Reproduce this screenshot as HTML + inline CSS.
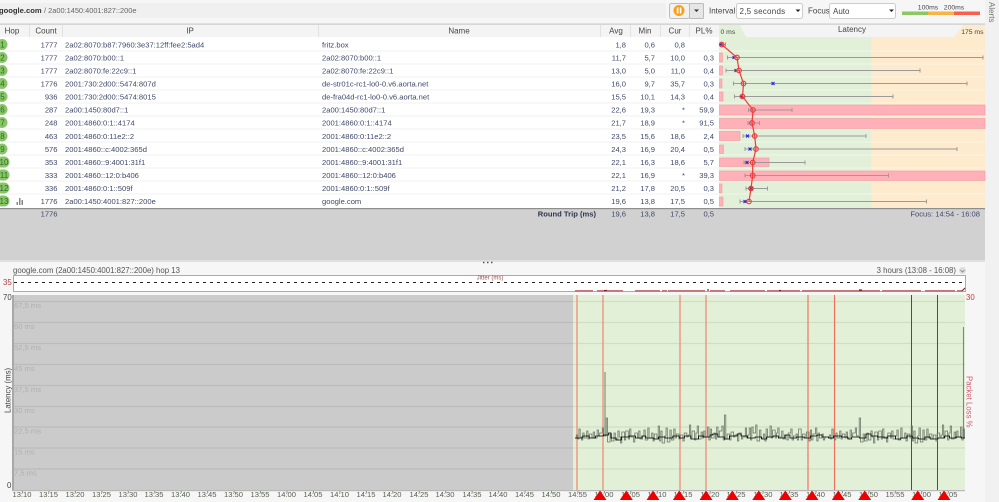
<!DOCTYPE html>
<html><head><meta charset="utf-8">
<style>
html,body{margin:0;padding:0;background:#f5f5f5;width:999px;height:502px;overflow:hidden}
svg{display:block;font-family:"Liberation Sans",sans-serif}
text{font-size:7.6px;fill:#3f4a6a}
.h text{fill:#444;text-anchor:middle;font-size:8px}
.r{text-anchor:end}
.n text{fill:#2f6b2f;text-anchor:middle;font-size:8px}
.t text{fill:#55604f;text-anchor:middle;font-size:7.6px}
.g text{fill:#b0b0b0;font-size:7.6px}
.k{fill:#444}
</style></head><body>
<svg width="999" height="502" viewBox="0 0 999 502" xmlns="http://www.w3.org/2000/svg">
<rect width="999" height="502" fill="#f6f6f6"/>
<rect x="985" width="14" height="502" fill="#f1f1f1"/>
<g filter="url(#b)">
<defs>
<filter id="b" x="0" y="0" width="100%" height="100%"><feGaussianBlur stdDeviation="0.38"/></filter>
<clipPath id="c"><rect x="575" y="295" width="390" height="195"/></clipPath>
</defs>
<!-- toolbar -->
<rect x="0" y="3" width="666" height="15" fill="#f0f0f0"/>
<text x="-1" y="13" style="font-weight:bold;font-size:7.6px;fill:#333">google.com</text>
<text x="44" y="13" style="font-size:7.4px;fill:#666">/ 2a00:1450:4001:827::200e</text>
<rect x="669.500" y="3.500" width="20" height="15" rx="2" fill="#f2f2f2" stroke="#bbb"/>
<rect x="689.500" y="3.500" width="14" height="15" rx="1" fill="#e6e6e6" stroke="#bbb"/>
<circle cx="679" cy="10.500" r="5.500" fill="#f6a01e"/>
<rect x="676.800" y="7.500" width="1.600" height="6" fill="#fff"/><rect x="679.800" y="7.500" width="1.600" height="6" fill="#fff"/>
<path d="M694 9.500h5l-2.500 2.500z" fill="#333"/>
<text x="709" y="13.500" class="k" style="font-size:8px">Interval</text>
<rect x="736.500" y="3.500" width="66" height="15" rx="2" fill="#fff" stroke="#ccc"/>
<text x="739.500" y="14" class="k" style="font-size:8px;letter-spacing:.25px">2,5 seconds</text>
<path d="M795.500 9.500h5l-2.500 2.500z" fill="#222"/>
<text x="808" y="13.500" class="k" style="font-size:8px">Focus</text>
<rect x="829.500" y="3.500" width="66" height="15" rx="2" fill="#fff" stroke="#ccc"/>
<text x="833" y="14" class="k" style="font-size:8px">Auto</text>
<path d="M889 9.500h5l-2.500 2.500z" fill="#222"/>
<text x="928" y="9.500" class="k" style="font-size:6.800px;text-anchor:middle">100ms</text>
<text x="954" y="9.500" class="k" style="font-size:6.800px;text-anchor:middle">200ms</text>
<rect x="902" y="11.500" width="26" height="3.500" fill="#8cc665"/><rect x="928" y="11.500" width="26" height="3.500" fill="#f7b547"/><rect x="954" y="11.500" width="26" height="3.500" fill="#f8604e"/>
<text transform="translate(989,2) rotate(90)" class="k" style="font-size:8px;fill:#777">Alerts</text>

<!-- header row -->
<rect x="0" y="24" width="985" height="13" fill="#f4f4f4"/>
<rect x="0" y="23.500" width="985" height="1.200" fill="#c9c9c9"/>
<path d="M29.500 25v12M62.500 25v12M318.500 25v12M600.500 25v12M630.500 25v12M660.500 25v12M689.500 25v12M719.500 25v12" stroke="#e2e2e2"/>
<g class="h">
<text x="12" y="33.500">Hop</text><text x="46" y="33.500">Count</text><text x="190" y="33.500">IP</text><text x="459" y="33.500">Name</text>
<text x="616" y="33.500">Avg</text><text x="645" y="33.500">Min</text><text x="675" y="33.500">Cur</text><text x="704" y="33.500">PL%</text>
<text x="852" y="32">Latency</text>
</g>
<path d="M719 25h21l6 12h-27z" fill="#e2f0d9"/><path d="M985 25h-22l-9 12h31z" fill="#fdebcd"/>
<text x="720.500" y="34" class="k" style="font-size:6.800px">0 ms</text>
<text x="983.500" y="34" class="k r" style="font-size:6.800px">175 ms</text>

<!-- table body -->
<rect x="0" y="37" width="719" height="171" fill="#fff"/>
<rect x="719" y="37" width="152.500" height="171" fill="#e2f0d9"/>
<rect x="871.500" y="37" width="113.500" height="171" fill="#feebcd"/>
<path d="M0 51h719M0 64h719M0 77h719M0 90h719M0 103h719M0 116h719M0 129h719M0 142h719M0 155h719M0 168h719M0 181h719M0 194h719" stroke="#f2f2f2" fill="none"/>
<path d="M719 51h266M719 64h266M719 77h266M719 90h266M719 103h266M719 116h266M719 129h266M719 142h266M719 155h266M719 168h266M719 181h266M719 194h266" stroke="#fff" stroke-opacity=".45" fill="none"/>

<!-- hop badges -->
<g fill="#88c565">
<circle cx="2" cy="44.500" r="5.500"/><circle cx="2" cy="57.500" r="5.500"/><circle cx="2" cy="70.500" r="5.500"/><circle cx="2" cy="83.500" r="5.500"/><circle cx="2" cy="96.500" r="5.500"/><circle cx="2" cy="109.500" r="5.500"/><circle cx="2" cy="122.500" r="5.500"/><circle cx="2" cy="136" r="5.500"/><circle cx="2" cy="149" r="5.500"/>
<rect x="-4" y="156.500" width="13.500" height="11" rx="5.500"/><rect x="-4" y="169.500" width="13.500" height="11" rx="5.500"/><rect x="-4" y="182.500" width="13.500" height="11" rx="5.500"/><rect x="-4" y="195.500" width="13.500" height="11" rx="5.500"/>
</g>
<g class="n">
<text x="2.500" y="47.500">1</text><text x="2.500" y="60.500">2</text><text x="2.500" y="73.500">3</text><text x="2.500" y="86.500">4</text><text x="2.500" y="99.500">5</text><text x="2.500" y="112.500">6</text><text x="2.500" y="125.500">7</text><text x="2.500" y="139">8</text><text x="2.500" y="152">9</text><text x="4" y="165">10</text><text x="4" y="178">11</text><text x="4" y="191">12</text><text x="4" y="204">13</text>
</g>
<path d="M16.500 202v3h1.500v-3zM19 198v7h1.500v-7zM21.500 200v5h1.500v-5z" fill="#888" stroke="none"/>

<!-- count -->
<g class="r">
<text class="r" x="57.500" y="47.500">1777</text><text class="r" x="57.500" y="60.500">1777</text><text class="r" x="57.500" y="73.500">1777</text><text class="r" x="57.500" y="86.500">1776</text><text class="r" x="57.500" y="99.500">936</text><text class="r" x="57.500" y="112.500">287</text><text class="r" x="57.500" y="125.500">248</text><text class="r" x="57.500" y="139">463</text><text class="r" x="57.500" y="152">576</text><text class="r" x="57.500" y="165">353</text><text class="r" x="57.500" y="178">333</text><text class="r" x="57.500" y="191">336</text><text class="r" x="57.500" y="204">1776</text>
</g>
<!-- ip -->
<text x="65" y="47.500">2a02:8070:b87:7960:3e37:12ff:fee2:5ad4</text>
<text x="65" y="60.500">2a02:8070:b00::1</text>
<text x="65" y="73.500">2a02:8070:fe:22c9::1</text>
<text x="65" y="86.500">2001:730:2d00::5474:807d</text>
<text x="65" y="99.500">2001:730:2d00::5474:8015</text>
<text x="65" y="112.500">2a00:1450:80d7::1</text>
<text x="65" y="125.500">2001:4860:0:1::4174</text>
<text x="65" y="139">2001:4860:0:11e2::2</text>
<text x="65" y="152">2001:4860::c:4002:365d</text>
<text x="65" y="165">2001:4860::9:4001:31f1</text>
<text x="65" y="178">2001:4860::12:0:b406</text>
<text x="65" y="191">2001:4860:0:1::509f</text>
<text x="65" y="204">2a00:1450:4001:827::200e</text>
<!-- name -->
<text x="322" y="47.500">fritz.box</text>
<text x="322" y="60.500">2a02:8070:b00::1</text>
<text x="322" y="73.500">2a02:8070:fe:22c9::1</text>
<text x="322" y="86.500">de-str01c-rc1-lo0-0.v6.aorta.net</text>
<text x="322" y="99.500">de-fra04d-rc1-lo0-0.v6.aorta.net</text>
<text x="322" y="112.500">2a00:1450:80d7::1</text>
<text x="322" y="125.500">2001:4860:0:1::4174</text>
<text x="322" y="139">2001:4860:0:11e2::2</text>
<text x="322" y="152">2001:4860::c:4002:365d</text>
<text x="322" y="165">2001:4860::9:4001:31f1</text>
<text x="322" y="178">2001:4860::12:0:b406</text>
<text x="322" y="191">2001:4860:0:1::509f</text>
<text x="322" y="204">google.com</text>
<!-- stats -->
<text class="r" x="626" y="47.500">1,8</text><text class="r" x="655" y="47.500">0,6</text><text class="r" x="685" y="47.500">0,8</text>
<text class="r" x="626" y="60.500">11,7</text><text class="r" x="655" y="60.500">5,7</text><text class="r" x="685" y="60.500">10,0</text><text class="r" x="714" y="60.500">0,3</text>
<text class="r" x="626" y="73.500">13,0</text><text class="r" x="655" y="73.500">5,0</text><text class="r" x="685" y="73.500">11,0</text><text class="r" x="714" y="73.500">0,4</text>
<text class="r" x="626" y="86.500">16,0</text><text class="r" x="655" y="86.500">9,7</text><text class="r" x="685" y="86.500">35,7</text><text class="r" x="714" y="86.500">0,3</text>
<text class="r" x="626" y="99.500">15,5</text><text class="r" x="655" y="99.500">10,1</text><text class="r" x="685" y="99.500">14,3</text><text class="r" x="714" y="99.500">0,4</text>
<text class="r" x="626" y="112.500">22,6</text><text class="r" x="655" y="112.500">19,3</text><text class="r" x="685" y="112.500">*</text><text class="r" x="714" y="112.500">59,9</text>
<text class="r" x="626" y="125.500">21,7</text><text class="r" x="655" y="125.500">18,9</text><text class="r" x="685" y="125.500">*</text><text class="r" x="714" y="125.500">91,5</text>
<text class="r" x="626" y="139">23,5</text><text class="r" x="655" y="139">15,6</text><text class="r" x="685" y="139">18,6</text><text class="r" x="714" y="139">2,4</text>
<text class="r" x="626" y="152">24,3</text><text class="r" x="655" y="152">16,9</text><text class="r" x="685" y="152">20,4</text><text class="r" x="714" y="152">0,5</text>
<text class="r" x="626" y="165">22,1</text><text class="r" x="655" y="165">16,3</text><text class="r" x="685" y="165">18,6</text><text class="r" x="714" y="165">5,7</text>
<text class="r" x="626" y="178">22,1</text><text class="r" x="655" y="178">16,9</text><text class="r" x="685" y="178">*</text><text class="r" x="714" y="178">39,3</text>
<text class="r" x="626" y="191">21,2</text><text class="r" x="655" y="191">17,8</text><text class="r" x="685" y="191">20,5</text><text class="r" x="714" y="191">0,3</text>
<text class="r" x="626" y="204">19,6</text><text class="r" x="655" y="204">13,8</text><text class="r" x="685" y="204">17,5</text><text class="r" x="714" y="204">0,5</text>

<!-- PL bars -->
<g fill="#ffb0b8" stroke="#f49a9a" stroke-width=".6">
<rect x="719.500" y="53" width="3" height="9"/><rect x="719.500" y="66" width="3" height="9"/><rect x="719.500" y="79" width="2.500" height="9"/><rect x="719.500" y="92" width="3.500" height="9"/>
<rect x="719.500" y="105" width="265.500" height="10"/><rect x="719.500" y="118.500" width="265.500" height="10"/>
<rect x="719.500" y="131.500" width="20.500" height="9"/><rect x="719.500" y="145" width="4" height="8.500"/><rect x="719.500" y="158" width="49.500" height="8.500"/><rect x="719.500" y="171" width="265.500" height="9.500"/><rect x="719.500" y="184" width="2.500" height="9"/><rect x="719.500" y="197" width="3.500" height="9"/>
</g>
<!-- ranges -->
<g stroke="#9a9a9a" stroke-width="1" fill="none">
<path d="M720 44.500h5.500M725.500 42.500v4"/>
<path d="M727.500 57.500h255.500M727.500 55.500v4M983 55.500v4"/>
<path d="M726 70.500h194M726 68.500v4M920 68.500v4"/>
<path d="M733.500 83.500h233.500M733.500 81.500v4M967 81.500v4"/>
<path d="M734.500 96.500h158.500M734.500 94.500v4M893 94.500v4"/>
<path d="M748.500 110h43.500M748.500 108v4M792 108v4"/>
<path d="M748 123h11.500M748 121v4M759.500 121v4"/>
<path d="M743 136h123M743 134v4M866 134v4"/>
<path d="M745 149h212M745 147v4M957 147v4"/>
<path d="M744 162.500h61M744 160.500v4M805 160.500v4"/>
<path d="M745 175.500h143.500M745 173.500v4M888.500 173.500v4"/>
<path d="M746 188.500h21.500M746 186.500v4M767.500 186.500v4"/>
<path d="M740 201.500h186.500M740 199.500v4M926.500 199.500v4"/>
</g>
<!-- blue x -->
<g stroke="#2222dd" stroke-width="1.100" fill="none">
<path d="M719.500 43l3 3M722.500 43l-3 3M732.500 56l3 3M735.500 56l-3 3M734.500 69l3 3M737.500 69l-3 3M771.500 82l3 3M774.500 82l-3 3M740 95l3 3M743 95l-3 3M746 134.500l3 3M749 134.500l-3 3M748.500 147.500l3 3M751.500 147.500l-3 3M745.500 161l3 3M748.500 161l-3 3M749.500 187l3 3M752.500 187l-3 3M743.500 200l3 3M746.500 200l-3 3"/>
</g>
<!-- latency line -->
<polyline points="721.700,44.500 737,57.500 739,70.500 743.500,83.500 742.500,96.500 753,110 752,123 754.700,136 756,149 752.700,162.500 752.700,175.500 751,188.500 749,201.500" fill="none" stroke="#ee3a3a" stroke-width="1.200"/>
<g fill="none" stroke="#e83a3a" stroke-width="1.100">
<circle cx="721.700" cy="44.500" r="2.300"/><circle cx="737" cy="57.500" r="2.300"/><circle cx="739" cy="70.500" r="2.300"/><circle cx="743.500" cy="83.500" r="2.300"/><circle cx="742.500" cy="96.500" r="2.300"/><circle cx="753" cy="110" r="2.300"/><circle cx="752" cy="123" r="2.300"/><circle cx="754.700" cy="136" r="2.300"/><circle cx="756" cy="149" r="2.300"/><circle cx="752.700" cy="162.500" r="2.300"/><circle cx="752.700" cy="175.500" r="2.300"/><circle cx="751" cy="188.500" r="2.300"/><circle cx="749" cy="201.500" r="2.300"/>
</g>

<!-- summary -->
<rect x="0" y="209" width="985" height="51" fill="#d1d1d1"/>
<rect x="0" y="208" width="985" height="1.200" fill="#8e8e8e"/>
<text class="r" x="57.500" y="216.500">1776</text>
<text class="r" x="596" y="216.500" style="font-weight:bold;fill:#2d3550">Round Trip (ms)</text>
<text class="r" x="626" y="216.500">19,6</text><text class="r" x="655" y="216.500">13,8</text><text class="r" x="685" y="216.500">17,5</text><text class="r" x="714" y="216.500">0,5</text>
<text class="r" x="980" y="216.500">Focus: 14:54 - 16:08</text>

<!-- splitter -->
<rect x="0" y="260" width="985" height="2" fill="#e0e0e0"/>
<path d="M483 262.500h1.500M487 262.500h1.500M491 262.500h1.500" stroke="#555" stroke-width="1.500"/>

<!-- graph header -->
<text x="13" y="273" style="fill:#555;font-size:7.800px">google.com (2a00:1450:4001:827::200e) hop 13</text>
<text x="956" y="273" class="r" style="fill:#555;font-size:7.800px">3 hours (13:08 - 16:08)</text>
<circle cx="962.500" cy="270.500" r="3.500" fill="#ddd"/><path d="M960.500 270l2 2 2-2" fill="none" stroke="#777" stroke-width=".7"/>
<!-- jitter -->
<rect x="13.500" y="275.500" width="952" height="16" fill="#fff" stroke="#aaa"/>
<text x="490" y="279.500" style="font-size:6px;fill:#a05050;text-anchor:middle">Jitter (ms)</text>
<line x1="14" y1="282.500" x2="965" y2="282.500" stroke="#222" stroke-dasharray="3 4"/>
<text x="3" y="285" style="fill:#b04040;font-size:7.800px">35</text>
<path d="M575 290.800h18M597 290.800h26M635 290.800h25M662 290.800h5M668 290.800h37M710 290.800h15M730 290.800h35M767 290.800h33M802 290.800h53M855 290.800h25M882 290.800h39M925 290.800h30M957 290.800h5" stroke="#9b2a2a" stroke-width=".9" fill="none"/>
<path d="M604 290.500h3M707 290h2M779 290.500h2M859 290h3M962 291l3-3" stroke="#8b2020" stroke-width="1.200" fill="none"/>

<!-- main graph -->
<rect x="13" y="295" width="560" height="195" fill="#cbcbcb"/>
<rect x="573" y="295" width="392" height="195" fill="#e1f0d6"/>
<rect x="12" y="295" width="2" height="196" fill="#a8a8a8"/>
<rect x="13" y="490" width="952" height="1.200" fill="#b8b8b8"/>
<g stroke="#000" stroke-opacity=".075" stroke-width="1.200">
<path d="M14 301.500h951M14 322.500h951M14 343.500h951M14 364.500h951M14 385.500h951M14 406.500h951M14 427h951M14 448h951M14 469h951"/>
</g>
<g class="g">
<text x="14" y="308">67,5 ms</text><text x="14" y="329">60 ms</text><text x="14" y="350">52,5 ms</text><text x="14" y="371">45 ms</text><text x="14" y="392">37,5 ms</text><text x="14" y="413">30 ms</text><text x="14" y="433.500">22,5 ms</text><text x="14" y="454.500">15 ms</text><text x="14" y="475.500">7,5 ms</text>
</g>
<text x="3" y="300" class="k" style="font-size:7.800px">70</text>
<text x="7" y="488" class="k" style="font-size:7.800px">0</text>
<text transform="translate(10.500,413) rotate(-90)" class="k" style="font-size:7.800px">Latency (ms)</text>
<text x="966" y="300" style="fill:#c83c3c;font-size:7.800px">30</text>
<text transform="translate(966.500,376) rotate(90)" style="fill:#d45a6a;font-size:7.800px">Packet Loss %</text>

<!-- red lines -->
<g fill="none">
<path d="M577 295v195M603 295v195M680 295v195M706 295v195" stroke="#f08a78" stroke-width="1.300"/>
<path d="M808 295v195M834.500 295v195" stroke="#f66a58" stroke-width="1.100"/>
<path d="M911.500 295v195M937.500 295v195" stroke="#e81010" stroke-width="1"/>
</g>

<!-- trace -->
<path d="M605 372V436M963.500 327V438" stroke="#7e8a74" stroke-width="1.100" fill="none"/>
<g clip-path="url(#c)">
<g id="gt" transform="translate(575,0) scale(1.3,1) translate(-575,0)">
<path vector-effect="non-scaling-stroke" fill="none" stroke="#6d7768" stroke-width=".8" d="M575 438h1V435h1V439h1V429h1V437h1V440h1V433h1V438h2V431h1V439h1V434h2V438h1V432h1V438h2V430h1V436h1V433h2V428h1V436h2V418h1V442h2V434h1V441h2V433h1V440h2V431h1V437h1V443h1V432h2V440h1V431h2V439h1V429h1V437h2V442h1V433h2V438h1V431h1V439h2V436h1V430h1V440h2V428h1V438h2V433h1V441h1V434h2V438h1V426h1V441h1V431h1V443h2V436h1V428h1V442h2V430h1V440h2V429h1V438h1V434h2V439h1V435h2V441h1V433h2V437h1V435h1V425h1V438h1V431h2V440h1V433h1V426h1V439h2V432h1V438h1V431h1V437h2V427h1V440h1V429h1V438h2V433h1V439h1V427h1V437h1V431h2V426h1V440h1V415h1V439h1V434h2V440h1V432h2V437h1V435h2V441h1V433h2V439h1V437h2V428h1V438h1V435h1V428h1V440h1V427h1V433h2V425h1V441h2V430h1V438h2V434h1V441h1V429h1V437h2V426h1V438h1V430h2V438h1V433h1V428h1V437h2V431h1V439h2V435h1V440h1V433h2V429h1V440h1V436h2V434h1V440h1V429h2V440h1V434h2V438h1V432h2V441h1V430h1V440h1V434h2V428h1V441h1V433h1V438h2V434h1V440h1V438h1"/>
</g>
<use href="#gt" x="253"/>
<g transform="translate(575,0) scale(1.287,1) translate(-575,0)">
<path vector-effect="non-scaling-stroke" fill="none" stroke="#000" stroke-width=".8" d="M575 438h6V436h5V438h5V436h6V435h4V433h2V438h4V440h4V437h6V436h5V438h5V436h3V438h6V439h4V437h5V438h6V436h5V438h4V436h5V439h6V436h4V437h5V435h2V434h4V437h5V439h4V436h6V434h3V436h5V438h6V437h5V439h4V437h5V436h4V438h5V435h4V438h5V437h6V438h5V436h5V435h4V437h5V438h4V436h6V437h5V439h3V437h6V438h5V434h4V436h5V437h5V438h3V436h6V439h4V438h5V436h4V438h5V439h5V437h4V439h6V438h5V436h4V438h5V437h4V438h3"/>
</g>
</g>

<!-- ticks -->
<line x1="22" y1="492" x2="965" y2="492" stroke="#555" stroke-width="1.200" stroke-dasharray="1 25.450"/>
<!-- time labels -->
<g class="t">
<text x="22" y="497">13:10</text><text x="48.500" y="497">13:15</text><text x="75" y="497">13:20</text><text x="101.500" y="497">13:25</text><text x="128" y="497">13:30</text><text x="154" y="497">13:35</text><text x="180.500" y="497">13:40</text><text x="207" y="497">13:45</text><text x="233.500" y="497">13:50</text><text x="260" y="497">13:55</text><text x="286.500" y="497">14:00</text><text x="313" y="497">14:05</text><text x="339.500" y="497">14:10</text><text x="366" y="497">14:15</text><text x="392" y="497">14:20</text><text x="419" y="497">14:25</text><text x="445" y="497">14:30</text><text x="472" y="497">14:35</text><text x="498" y="497">14:40</text><text x="524.500" y="497">14:45</text><text x="551" y="497">14:50</text><text x="577.500" y="497">14:55</text><text x="604" y="497">15:00</text><text x="630.500" y="497">15:05</text><text x="657" y="497">15:10</text><text x="683" y="497">15:15</text><text x="710" y="497">15:20</text><text x="736" y="497">15:25</text><text x="763" y="497">15:30</text><text x="789" y="497">15:35</text><text x="815.500" y="497">15:40</text><text x="842" y="497">15:45</text><text x="868.500" y="497">15:50</text><text x="895" y="497">15:55</text><text x="921.500" y="497">16:00</text><text x="948" y="497">16:05</text>
</g>
<!-- triangles -->
<g fill="#ee0000">
<path d="M600 490.500l6.500 9.500h-13zM626.300 490.500l6.500 9.500h-13zM653 490.500l6.500 9.500h-13zM679.300 490.500l6.500 9.500h-13zM706 490.500l6.500 9.500h-13zM732.300 490.500l6.500 9.500h-13zM758.700 490.500l6.500 9.500h-13zM785.300 490.500l6.500 9.500h-13zM812 490.500l6.500 9.500h-13zM838.300 490.500l6.500 9.500h-13zM864.700 490.500l6.500 9.500h-13zM917.700 490.500l6.500 9.500h-13zM944 490.500l6.500 9.500h-13z"/>
</g>
</g>
</svg>
</body></html>
